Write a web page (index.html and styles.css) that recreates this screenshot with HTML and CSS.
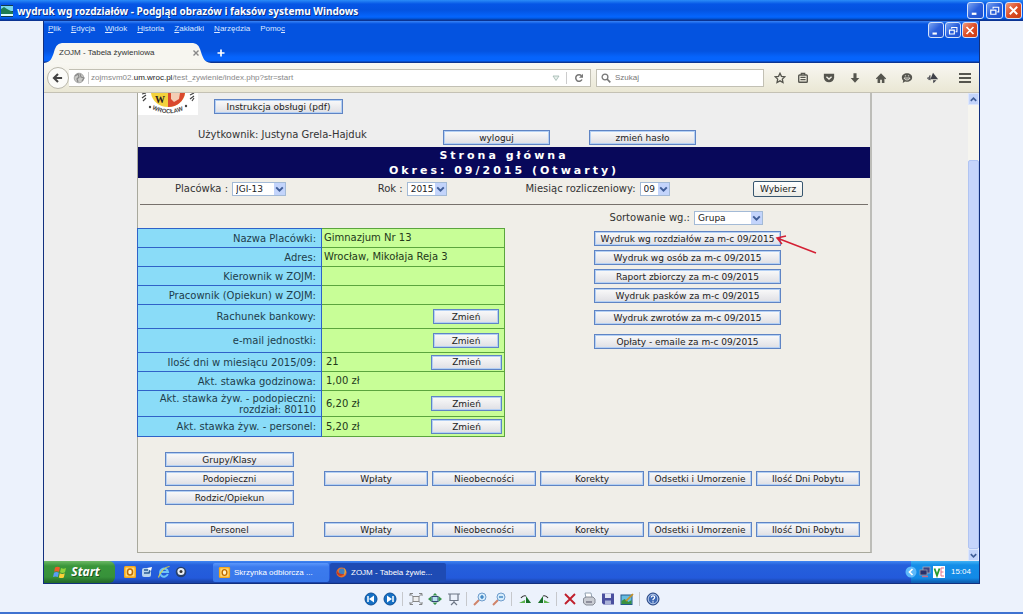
FILE: index.html
```html
<!DOCTYPE html>
<html lang="pl">
<head>
<meta charset="utf-8">
<title>wydruk wg rozdziałów</title>
<link rel="stylesheet" href="styles.css">
</head>
<body>
<svg class="defs" width="0" height="0" aria-hidden="true">
  <symbol id="i-min" viewBox="0 0 16 16"><path d="M4 11.500h5" stroke="#fff" stroke-width="2.400"/></symbol>
  <symbol id="i-max" viewBox="0 0 16 16"><path d="M6.500 6V4.500h6v5H11M6 4.500h7" fill="none" stroke="#fff" stroke-width="1.200"/><path d="M4 7.500h5.500v4.500H4z" fill="none" stroke="#fff" stroke-width="1.300"/></symbol>
  <symbol id="i-close" viewBox="0 0 16 16"><path d="M4 4l8 8M12 4l-8 8" stroke="#fff" stroke-width="2"/></symbol>
  <symbol id="i-down" viewBox="0 0 10 10"><path d="M2 3.500l3 3 3-3" fill="none" stroke="#3f5d98" stroke-width="1.800"/></symbol>
  <symbol id="i-up" viewBox="0 0 10 10"><path d="M2 6.500l3-3 3 3" fill="none" stroke="#3f5d98" stroke-width="1.800"/></symbol>
  <symbol id="i-outlook" viewBox="0 0 14 14"><rect x="1" y="1" width="12" height="12" rx="1.500" fill="#f5a81c"/><rect x="2.500" y="2.500" width="9" height="9" fill="#ffd874"/><ellipse cx="7" cy="7" rx="2.500" ry="3.100" fill="#fff3c8" stroke="#c06c00" stroke-width="1.500"/></symbol>
</svg>

<div class="viewer">
  <header class="titlebar">
    <svg class="app-icon" viewBox="0 0 12 12"><rect width="12" height="12" fill="#123a4c"/><path d="M0 1h12v5H0z" fill="#76d7ee"/><path d="M0 4l3-2 3 2 6 3v2H0z" fill="#1f7d54"/><path d="M0 9h12v2H0z" fill="#dff"/></svg>
    <h1 class="viewer-title">wydruk wg rozdziałów - Podgląd obrazów i faksów systemu Windows</h1>
    <div class="win-buttons">
      <button class="win" aria-label="Minimalizuj"><svg><use href="#i-min"/></svg></button>
      <button class="win" aria-label="Przywróć"><svg><use href="#i-max"/></svg></button>
      <button class="win win-close" aria-label="Zamknij"><svg><use href="#i-close"/></svg></button>
    </div>
  </header>

  <div class="stage">
    <div class="browser">
      <div class="chrome">
        <div class="menu-row">
          <nav class="menu">
            <a href="#"><u>P</u>lik</a><a href="#"><u>E</u>dycja</a><a href="#"><u>W</u>idok</a><a href="#"><u>H</u>istoria</a><a href="#"><u>Z</u>akładki</a><a href="#"><u>N</u>arzędzia</a><a href="#">Pomo<u>c</u></a>
          </nav>
          <div class="win-buttons small">
            <button class="win" aria-label="Minimalizuj okno"><svg><use href="#i-min"/></svg></button>
            <button class="win" aria-label="Przywróć okno"><svg><use href="#i-max"/></svg></button>
            <button class="win win-close" aria-label="Zamknij okno"><svg><use href="#i-close"/></svg></button>
          </div>
        </div>
        <div class="tabs">
          <div class="tab">
            <svg class="tab-shape" viewBox="0 0 167 20" preserveAspectRatio="none"><path d="M0 20C7 19 8 15 10 9 12 2 14 0 20 0H147C153 0 155 2 157 9 159 15 160 19 167 20Z" fill="#f7f6f0"/></svg>
            <span class="tab-title">ZOJM - Tabela żywieniowa</span>
            <button class="tab-close" aria-label="Zamknij kartę"><svg viewBox="0 0 8 8"><path d="M1.500 1.500l5 5M6.500 1.500l-5 5" stroke="#888" stroke-width="1.400"/></svg></button>
          </div>
          <button class="tab-new" aria-label="Nowa karta"><svg viewBox="0 0 8 8"><path d="M4 .5v7M.5 4h7" stroke="#fff" stroke-width="1.700"/></svg></button>
        </div>
      </div>

      <div class="navbar">
        <button class="back" aria-label="Wstecz"><svg viewBox="0 0 22 22"><path d="M6 11h10M11 6l-5 5 5 5" fill="none" stroke="#444" stroke-width="2.500"/></svg></button>
        <div class="urlbar">
          <svg class="globe" viewBox="0 0 12 12"><circle cx="6" cy="6" r="4.800" fill="#c9c9c6" stroke="#999" stroke-width=".8"/><path d="M2 4l3-2 1 3-2 2 1 3M7 2l1 3 3 1-2 3" fill="none" stroke="#888" stroke-width="1.200"/></svg>
          <span class="url">zojmsvm02.<b>um.wroc.pl</b>/test_zywienie/index.php?str=start</span>
          <svg class="drop" viewBox="0 0 8 8"><path d="M1 2h6L4 6.500z" fill="#e8f0ec" stroke="#9fb5ad" stroke-width=".8"/></svg>
          <button class="reload" aria-label="Odśwież"><svg viewBox="0 0 10 10"><path d="M8 6.500A3.300 3.300 0 1 1 7.500 2.800" fill="none" stroke="#777" stroke-width="1.500"/><path d="M9 .8v4H5z" fill="#777"/></svg></button>
        </div>
        <label class="search">
          <svg viewBox="0 0 10 10"><circle cx="4" cy="4" r="2.900" fill="none" stroke="#777" stroke-width="1.300"/><path d="M6 6l3.300 3.300" stroke="#777" stroke-width="1.700"/></svg>
          <input type="text" placeholder="Szukaj" aria-label="Szukaj">
        </label>
        <div class="tools">
          <button aria-label="Dodaj zakładkę"><svg viewBox="0 0 14 14"><path d="M7 1.500l1.700 3.600 3.900.5-2.900 2.700.8 3.900L7 10.300l-3.500 1.900.8-3.900L1.400 5.600l3.900-.5z" fill="none" stroke="#55554e" stroke-width="1.500"/></svg></button>
          <button aria-label="Zakładki"><svg viewBox="0 0 14 14"><rect x="2" y="3.500" width="10" height="8.500" rx="1" fill="none" stroke="#55554e" stroke-width="1.600"/><path d="M5 3.500V1.500h4v2M4 6.300h6M4 9h6" fill="none" stroke="#55554e" stroke-width="1.400"/></svg></button>
          <button aria-label="Pocket"><svg viewBox="0 0 14 14"><path d="M1 2h12v4.500a6 5.500 0 0 1-12 0z" fill="#55554e"/><path d="M4 5.500l3 2.800 3-2.800" fill="none" stroke="#f2f0e6" stroke-width="1.600"/></svg></button>
          <button aria-label="Pobrane"><svg viewBox="0 0 14 14"><path d="M5.200 1.500h3.600V7H12l-5 5.500L2 7h3.200z" fill="#55554e"/></svg></button>
          <button aria-label="Strona startowa"><svg viewBox="0 0 14 14"><path d="M7 1.500L1 7.500l1 1 1-.8v5h3V9h2v3.700h3v-5l1 .8 1-1z" fill="#55554e"/></svg></button>
          <button aria-label="Czat"><svg viewBox="0 0 14 14"><path d="M7 1.500c3.500 0 6 2 6 5s-2.500 5-6 5c-.8 0-1.500-.1-2.200-.4L2 12.700l.6-2.700C1.600 9.200 1 8 1 6.500c0-3 2.500-5 6-5z" fill="#55554e"/><path d="M3.500 7h7c-1 3-6 3-7 0zM4.500 4.500h1.500M8 4.500h1.500" stroke="#f2f0e6" stroke-width="1" fill="none"/></svg></button>
          <button aria-label="Dodatek"><svg viewBox="0 0 14 14"><path d="M7 1l6 7.500H4zM0 7l2-1.500v4zM2.500 4.500l1.500-1v6.500l-1.500-1zM7 9.500h4L7.500 13z" fill="#3f4148"/></svg></button>
          <button class="burger" aria-label="Menu"><svg viewBox="0 0 14 14"><path d="M1 3h12M1 7h12M1 11h12" stroke="#55554e" stroke-width="2"/></svg></button>
        </div>
      </div>

      <div class="viewport">
        <main class="panel">
          <div class="panel-head">
            <svg class="crest" viewBox="0 0 60 22">
              <rect width="60" height="22" fill="#fff"/>
              <path d="M13 0H47C46 8 39 14 30 14S14 8 13 0z" fill="#f3d23d"/><path d="M30 0h17C46 8 39 14 30 14z" fill="#d9492f"/><path d="M33 0h9l-1 6-5 3-3-3z" fill="#f4cdb4"/>
              <path id="ring" d="M14 16Q31 25 50 15" fill="none"/>
              <text x="17" y="10" class="crest-w">W</text>
              <text class="crest-t"><textPath href="#ring">WROCŁAW</textPath></text>
              <circle cx="12" cy="14" r="1.200" fill="#444"/><circle cx="48" cy="13" r="1.200" fill="#444"/>
              <path d="M4 1l4-1M4 5l4-3M5 8l3-3M52 2l4-2M52 6l4-3M54 8l2-3" stroke="#444" stroke-width="1.200"/>
            </svg>
            <div class="head-rows">
              <button class="btn w-129">Instrukcja obsługi (pdf)</button>
              <div class="user-row">
                <span class="user">Użytkownik: Justyna Grela-Hajduk</span>
                <button class="btn w-107">wyloguj</button>
                <button class="btn w-107">zmień hasło</button>
              </div>
            </div>
          </div>

          <h2 class="band">Strona główna<br>Okres: 09/2015 (Otwarty)</h2>

          <form class="filters">
            <div class="field"><label for="place">Placówka :</label><span class="sel w-54"><select id="place"><option>JGI-13</option></select><svg><use href="#i-down"/></svg></span></div>
            <div class="field"><label for="year">Rok :</label><span class="sel w-40"><select id="year"><option>2015</option></select><svg><use href="#i-down"/></svg></span></div>
            <div class="field"><label for="month">Miesiąc rozliczeniowy:</label><span class="sel w-30"><select id="month"><option>09</option></select><svg><use href="#i-down"/></svg></span></div>
            <button class="xp-btn" type="button">Wybierz</button>
          </form>

          <div class="columns">
            <table class="info">
              <tbody>
                <tr><th scope="row">Nazwa Placówki:</th><td>Gimnazjum Nr 13</td></tr>
                <tr><th scope="row">Adres:</th><td>Wrocław, Mikołaja Reja 3</td></tr>
                <tr><th scope="row">Kierownik w ZOJM:</th><td></td></tr>
                <tr><th scope="row">Pracownik (Opiekun) w ZOJM:</th><td></td></tr>
                <tr class="tall"><th scope="row">Rachunek bankowy:</th><td><div class="cell inset"><span></span><button class="btn w-66">Zmień</button></div></td></tr>
                <tr class="tall"><th scope="row">e-mail jednostki:</th><td><div class="cell inset"><span></span><button class="btn w-66">Zmień</button></div></td></tr>
                <tr><th scope="row">Ilość dni w miesiącu 2015/09:</th><td><div class="cell"><span>21</span><button class="btn w-71">Zmień</button></div></td></tr>
                <tr><th scope="row">Akt. stawka godzinowa:</th><td><div class="cell"><span>1,00 zł</span></div></td></tr>
                <tr class="double"><th scope="row">Akt. stawka żyw. - podopieczni:<br>rozdział: 80110</th><td><div class="cell"><span>6,20 zł</span><button class="btn w-71">Zmień</button></div></td></tr>
                <tr class="last"><th scope="row">Akt. stawka żyw. - personel:</th><td><div class="cell"><span>5,20 zł</span><button class="btn w-71">Zmień</button></div></td></tr>
              </tbody>
            </table>
            <div class="reports">
              <div class="field sort"><label for="sort">Sortowanie wg.:</label><span class="sel w-69"><select id="sort"><option>Grupa</option></select><svg><use href="#i-down"/></svg></span></div>
              <div class="marked">
                <button class="btn">Wydruk wg rozdziałów za m-c 09/2015</button>
                <svg class="arrow" viewBox="0 0 44 20"><path d="M42 18L3 3M12 1L3 3l5 6" fill="none" stroke="#d42034" stroke-width="1.500"/></svg>
              </div>
              <button class="btn">Wydruk wg osób za m-c 09/2015</button>
              <button class="btn">Raport zbiorczy za m-c 09/2015</button>
              <button class="btn">Wydruk pasków za m-c 09/2015</button>
              <button class="btn apart">Wydruk zwrotów za m-c 09/2015</button>
              <button class="btn apart-more">Opłaty - emaile za m-c 09/2015</button>
            </div>
          </div>

          <div class="actions">
            <button class="btn first">Grupy/Klasy</button>
            <button class="btn first">Podopieczni</button>
            <button class="btn">Wpłaty</button><button class="btn">Nieobecności</button><button class="btn">Korekty</button><button class="btn">Odsetki i Umorzenie</button><button class="btn">Ilość Dni Pobytu</button>
            <button class="btn first">Rodzic/Opiekun</button>
          </div>
          <div class="actions staff">
            <button class="btn first">Personel</button>
            <button class="btn">Wpłaty</button><button class="btn">Nieobecności</button><button class="btn">Korekty</button><button class="btn">Odsetki i Umorzenie</button><button class="btn">Ilość Dni Pobytu</button>
          </div>
        </main>
        <div class="scrollbar">
          <button aria-label="W górę"><svg><use href="#i-up"/></svg></button>
          <div class="thumb"></div>
          <button aria-label="W dół"><svg><use href="#i-down"/></svg></button>
        </div>
      </div>

      <footer class="taskbar">
        <button class="start"><svg viewBox="0 0 14 14"><path d="M2 2.500q2.500-1.500 5 0L6 6.800q-2.300-1.300-4.800 0z" fill="#ee5b2b"/><path d="M8 3q2.500 1.300 5 0l-1 4.300q-2.500 1.200-5 0z" fill="#8ed23c"/><path d="M1 7.800q2.400-1.400 4.800 0l-1 4.200Q2.500 10.800 0 12z" fill="#5a9cf5"/><path d="M6.800 8.300q2.400 1.300 5 0l-1 4.200q-2.500 1.200-5 0z" fill="#fbd037"/></svg>Start</button>
        <div class="quick">
          <svg viewBox="0 0 14 14"><use href="#i-outlook"/></svg>
          <svg viewBox="0 0 14 14"><rect x="2" y="3" width="9" height="9" rx="2" fill="#b8d4ee"/><path d="M4 8h5l2-5M4 5h4" stroke="#2a5c96" stroke-width="1.600" fill="none"/><path d="M7 3l5-1-1 4z" fill="#fff"/></svg>
          <svg viewBox="0 0 14 14"><path d="M10.800 9A4 4 0 1 1 11 7H4.500" fill="none" stroke="#6fc4f7" stroke-width="2"/><path d="M1.500 12.500C3 7 8 1.500 12.500 1.500" fill="none" stroke="#d9d452" stroke-width="1.100"/></svg>
          <svg viewBox="0 0 14 14"><circle cx="7" cy="7" r="5.300" fill="#27406b"/><circle cx="7" cy="6.500" r="3.600" fill="#e9eef5"/><circle cx="7" cy="6.500" r="1.500" fill="#333"/></svg>
        </div>
        <button class="task"><svg viewBox="0 0 14 14"><use href="#i-outlook"/></svg>Skrzynka odbiorcza ...</button>
        <button class="task active"><svg viewBox="0 0 14 14"><circle cx="7" cy="7" r="5.500" fill="#e8702a"/><circle cx="7.500" cy="6" r="3.400" fill="#3f7fc0"/><path d="M2 4q1 5 8 5-5 4-8-1z" fill="#c33a24"/><path d="M10 2q3 4 0 8 1-4 0-8z" fill="#f5c23b"/></svg>ZOJM - Tabela żywie...</button>
        <div class="tray">
          <svg class="chev" viewBox="0 0 12 12"><circle cx="6" cy="6" r="5.500" fill="#5db9fa"/><path d="M7.500 3L4.500 6l3 3" fill="none" stroke="#fff" stroke-width="1.700"/></svg>
          <svg viewBox="0 0 12 12"><rect x="4" y="1" width="7" height="6" fill="#3c4380" stroke="#aab" stroke-width=".8"/><rect x="1" y="4" width="7" height="5" fill="#28306a" stroke="#99a" stroke-width=".8"/><path d="M3 10.500h6" stroke="#c66b87" stroke-width="1.400"/></svg>
          <svg viewBox="0 0 12 12"><rect width="12" height="12" fill="#fff"/><path d="M1.500 2.500L4 9.500l2.500-7" fill="none" stroke="#259b2e" stroke-width="1.800"/><path d="M11 2H8v8h3M8 6h2.500" fill="none" stroke="#e0768c" stroke-width="1"/></svg>
          <time>15:04</time>
        </div>
      </footer>
    </div>

    <div class="toolbar">
      <button aria-label="Poprzedni"><svg viewBox="0 0 14 14"><circle cx="7" cy="7" r="6" fill="#1570c4" stroke="#0e4f97"/><path d="M4 4v6" stroke="#fff" stroke-width="1.500"/><path d="M10 3.500v7L5 7z" fill="#fff"/></svg></button>
      <button aria-label="Następny"><svg viewBox="0 0 14 14"><circle cx="7" cy="7" r="6" fill="#1570c4" stroke="#0e4f97"/><path d="M10 4v6" stroke="#fff" stroke-width="1.500"/><path d="M4 3.500v7L9 7z" fill="#fff"/></svg></button>
      <i></i>
      <button aria-label="Najlepsze dopasowanie"><svg viewBox="0 0 14 14"><rect x="4" y="4.500" width="6" height="5" fill="#eee" stroke="#888"/><path d="M1 4V1.500h3M10 1.500h3V4M13 10v2.500h-3M4 12.500H1V10M1.500 2l2.500 2.500M12.500 2L10 4.500M12.500 12L10 9.500M1.500 12L4 9.500" fill="none" stroke="#777" stroke-width=".9"/></svg></button>
      <button aria-label="Rzeczywisty rozmiar"><svg viewBox="0 0 14 14"><rect x="4" y="4.500" width="6" height="5" fill="#b9e3ef" stroke="#347"/><path d="M7 1l2.500 2.500h-5zM7 13l2.500-2.500h-5zM0 7l3.500-3v6zM14 7l-3.500-3v6z" fill="#36924a"/></svg></button>
      <button aria-label="Pokaz slajdów"><svg viewBox="0 0 14 14"><path d="M1 2h12M3 2v6.500h8V2M7 8.500v2M4 13l3-3 3 3" fill="none" stroke="#6d7685" stroke-width="1.200"/></svg></button>
      <i></i>
      <button aria-label="Powiększ"><svg viewBox="0 0 14 14"><path d="M1 13l5-5" stroke="#d0846a" stroke-width="2"/><circle cx="9" cy="5" r="4" fill="#d5ecfc" stroke="#6e9ccc"/><path d="M9 3v4M7 5h4" stroke="#2472b8" stroke-width="1.200"/></svg></button>
      <button aria-label="Pomniejsz"><svg viewBox="0 0 14 14"><path d="M1 13l5-5" stroke="#d0846a" stroke-width="2"/><circle cx="9" cy="5" r="4" fill="#d5ecfc" stroke="#6e9ccc"/><path d="M7 5h4" stroke="#2472b8" stroke-width="1.200"/></svg></button>
      <i></i>
      <button aria-label="Obróć w prawo"><svg viewBox="0 0 14 14"><path d="M1 11h6V8z" fill="#5cb44c"/><path d="M8 11V4l5 7z" fill="#176f27"/><path d="M3 6q2-3 5-2" fill="none" stroke="#333" stroke-width="1.200"/></svg></button>
      <button aria-label="Obróć w lewo"><svg viewBox="0 0 14 14"><path d="M13 11H7V8z" fill="#5cb44c"/><path d="M6 11V4l-5 7z" fill="#176f27"/><path d="M11 6Q9 3 6 4" fill="none" stroke="#333" stroke-width="1.200"/></svg></button>
      <i></i>
      <button aria-label="Usuń"><svg viewBox="0 0 14 14"><path d="M2 2l10 10M12 2L2 12" stroke="#c01f2c" stroke-width="1.900"/></svg></button>
      <button aria-label="Drukuj"><svg viewBox="0 0 14 14"><path d="M4 6L3 1h6l1 5" fill="#fff" stroke="#89a" stroke-width=".9"/><path d="M1.500 6.500L4 5h7l2 2v4l-2 2H4l-2.500-2z" fill="#c9ccd3" stroke="#7d828c" stroke-width=".9"/><path d="M4 10h6" stroke="#667" stroke-width="1.200"/></svg></button>
      <button aria-label="Zapisz"><svg viewBox="0 0 14 14"><path d="M1 1.500h12v11H2.500L1 11z" fill="#4a4f9e"/><path d="M4 1.500h6v4.500H4z" fill="#dfe4f4"/><path d="M4 8.500h6v4H4z" fill="#aab2d8"/></svg></button>
      <button aria-label="Edytuj"><svg viewBox="0 0 14 14"><rect x="1" y="3" width="11" height="9.500" fill="#65bce0" stroke="#245a8c"/><path d="M1.500 9l3-2 4 3 3-2v4h-10z" fill="#3b9140"/><path d="M6 9l7-7" stroke="#c99224" stroke-width="1.700"/></svg></button>
      <i></i>
      <button aria-label="Pomoc"><svg viewBox="0 0 14 14"><circle cx="7" cy="7" r="6" fill="#3d68b4" stroke="#24417c"/><circle cx="7" cy="7" r="4.800" fill="none" stroke="#dbe6f7" stroke-width=".8"/><path d="M5.300 5.500q0-1.700 1.700-1.700t1.700 1.500Q8.700 6.400 7 7.500v.8M7 9.300v1.200" fill="none" stroke="#fff" stroke-width="1.200"/></svg></button>
    </div>
  </div>
</div>
</body>
</html>
```

FILE: styles.css
```css
* { box-sizing: border-box; }
body { margin: 0; font-family: "DejaVu Sans", sans-serif; font-size: 10px; line-height: 12px; color: #333; }
button { margin: 0; padding: 0; border: 0; background: none; font: inherit; color: inherit; display: flex; align-items: center; justify-content: center; }
button svg, .tray svg, .quick svg { display: block; }
.defs { position: absolute; }

.viewer { min-height: 100vh; display: flex; flex-direction: column; background: #ecf2fc; border-bottom: 2px solid #3f72d0; }
.titlebar { height: 21px; flex: none; display: flex; align-items: center; gap: 4px; padding: 0 0 0 1px; background: linear-gradient(#2b8cf8 0, #0656e6 4px, #0453e0 10px, #0566ff 17px, #0150d0 19px, #0b3492 20px); }
.app-icon { width: 12px; height: 12px; }
.viewer-title { flex: 1; margin: 0; color: #fff; font: bold 10px/14px "Noto Sans", "DejaVu Sans Condensed", sans-serif; text-shadow: 1px 1px #0a2f86; }
.win-buttons { display: flex; gap: 2px; padding-right: 1px; }
.win { width: 17px; height: 17px; border: 1px solid #d4e2fb; border-radius: 3px; background: linear-gradient(135deg, #7ba4f0, #2a5fdc 50%, #1e50cc); }
.win svg { width: 15px; height: 15px; }
.win-close { background: linear-gradient(135deg, #f09a7c, #dd4e27 50%, #c93a12); }
.small .win { width: 16px; height: 16px; }
.small { gap: 1px; padding: 1px 1px 0 0; }

.stage { flex: 1; padding: 0 43px; display: flex; flex-direction: column; }
.browser { flex: 1; display: flex; flex-direction: column; border: solid #12307e; border-width: 0 1px 1px; background: #eee; }
.chrome { font: 8px/12px "Liberation Sans", sans-serif; background: linear-gradient(#3a84f6 0, #0453e0 3px, #0453e0 30px, #0664fc 36px, #0664fc 40px, #0b3492 41px); }
.menu-row { height: 22px; display: flex; justify-content: space-between; }
.menu { display: flex; gap: 10px; padding: 2px 0 0 4px; }
.menu a { color: #dbe8ff; text-decoration: none; }
.tabs { height: 20px; display: flex; align-items: stretch; }
.tab { position: relative; width: 167px; display: flex; align-items: center; justify-content: space-between; padding: 0 11px 0 15px; color: #333; }
.tab-shape { position: absolute; inset: 0; width: 100%; height: 100%; }
.tab-title { position: relative; }
.tab-close { position: relative; }
.tab-close svg, .tab-new svg { width: 8px; height: 8px; }
.tab-new { width: 20px; }

.navbar { height: 30px; flex: none; display: flex; align-items: center; padding: 0 3px; background: linear-gradient(#f8f7f2, #eae7d4); border-bottom: 1px solid #c4c1b4; font: 8px/12px "Liberation Sans", sans-serif; }
.back { width: 22px; height: 22px; flex: none; border: 1px solid #b9b7ab; border-radius: 50%; background: #fbfbf8; }
.back svg { width: 18px; height: 18px; }
.urlbar { flex: 1; height: 18px; display: flex; align-items: center; border: 1px solid #c2c0b4; border-left: 0; background: #fff; padding-left: 4px; }
.globe { width: 12px; height: 12px; margin-right: 3px; }
.url { flex: 1; border-left: 1px solid #ccc; padding-left: 2px; color: #888; }
.url b { font-weight: normal; color: #222; }
.drop { width: 8px; height: 8px; margin-right: 6px; }
.reload { width: 24px; height: 12px; border-left: 1px solid #ccc; }
.reload svg { width: 10px; height: 10px; }
.search { width: 168px; height: 18px; margin-left: 5px; display: flex; align-items: center; gap: 4px; border: 1px solid #c2c0b4; background: #fff; padding-left: 4px; }
.search svg { width: 10px; height: 10px; flex: none; }
.search input { width: 100%; border: 0; padding: 0; outline: 0; font: inherit; background: none; }
.search input::placeholder { color: #777; opacity: 1; }
.tools { display: flex; align-items: center; gap: 14px; padding: 0 4px 0 10px; }
.tools svg { width: 12px; height: 12px; }
.tools button:first-child { margin-right: -3px; }
.tools .burger { margin-left: 3px; padding-left: 2px; }
.burger svg { width: 14px; height: 14px; }

.viewport { flex: 1; display: flex; }
.panel { flex: 1; margin: 0 96px 8px 93px; border: 1px solid #a8a89c; border-top: 0; border-right: 2px solid #bdbdb8; background: #f0eee8; }
.panel-head { display: flex; background: #eee; padding-bottom: 2px; }
.crest { width: 60px; height: 22px; flex: none; }
.crest-w { font: bold 10px/10px "Liberation Serif", serif; fill: #2b2020; }
.crest-t { font: bold 6px "Liberation Sans", sans-serif; fill: #444; }
.head-rows { flex: 1; padding-top: 6px; }
.head-rows > .btn { margin: 0 0 16px 16px; }
.user-row { display: flex; align-items: flex-start; }
.user { flex: 0 0 245px; line-height: 10px; }
.user-row .btn + .btn { margin-left: 39px; }

.btn { height: 15px; font-size: 9px; white-space: nowrap; color: #222; border: 1px solid #5f84c4; background: linear-gradient(#fafafa, #dfdfe4); box-shadow: inset 0 0 0 1px #b4d0f4; }
.w-129 { width: 129px; }
.w-107 { width: 107px; }
.w-66 { width: 66px; }
.w-71 { width: 71px; }

.band { margin: 0; padding-top: 1px; background: #08085a; color: #fff; text-align: center; font-size: 11px; line-height: 15px; letter-spacing: 3px; }

.filters { display: grid; grid-template-columns: 203fr 148fr 228fr 115fr; align-items: center; margin: 0 2px; padding: 3px 0 7px 35px; border-bottom: 1px solid #77716c; }
.field { display: flex; align-items: center; gap: 4px; white-space: nowrap; }
.sel { position: relative; display: block; height: 14px; }
.sel select { display: block; width: 100%; height: 100%; appearance: none; margin: 0; padding: 0 0 0 3px; border: 1px solid #a3bad6; border-radius: 0; background: #fff; font: 9px/12px "DejaVu Sans", sans-serif; color: #222; }
.sel svg { position: absolute; right: 1px; top: 1px; width: 11px; height: 12px; background: #c3d4fb; pointer-events: none; }
.w-54 { width: 54px; }
.w-40 { width: 40px; }
.w-30 { width: 30px; }
.w-69 { width: 69px; }
.xp-btn { width: 50px; height: 16px; border: 1px solid #38566f; border-radius: 2px; background: linear-gradient(#fff, #ecebe5); font-size: 9px; color: #222; }

.columns { display: flex; align-items: flex-start; gap: 89px; }
.info { width: 368px; margin: 23px 0 0 -1px; border-collapse: collapse; table-layout: fixed; }
.info tr { height: 19px; }
.info .tall { height: 24px; }
.info .double { height: 26px; }
.info .last { height: 20px; }
.info th { width: 184px; padding: 0 5px 0 0; border: 1px solid #2f62c8; background: #8adcf8; font-weight: normal; text-align: right; line-height: 11px; white-space: nowrap; color: #1d3c4c; }
.info td { padding: 0 2px; border: 1px solid #5ba53e; background: #c8fe97; color: #23391a; }
.cell { display: flex; align-items: center; justify-content: space-between; padding-left: 2px; min-height: 15px; }
.inset { padding-right: 3px; }
.reports { width: 187px; padding-top: 6px; display: flex; flex-direction: column; gap: 4px; }
.reports .btn { width: 100%; }
.sort { justify-content: flex-end; padding-right: 18px; margin-bottom: 2px; }
.marked { position: relative; }
.arrow { position: absolute; left: 180px; top: 4px; width: 44px; height: 20px; }
.reports .apart { margin-top: 3px; }
.reports .apart-more { margin-top: 5px; }

.actions { display: grid; grid-template-columns: 155fr repeat(5, 104fr); gap: 4px; padding: 15px 10px 0 27px; }
.actions .first { grid-column: 1; width: 129px; }
.staff { padding-top: 17px; padding-bottom: 15px; }

.scrollbar { width: 11px; display: flex; flex-direction: column; background: #f6f5ef; }
.scrollbar button { height: 12px; background: #c3d4fb; border: 1px solid #dde7fd; }
.scrollbar svg { width: 9px; height: 9px; }
.thumb { flex: 1; margin: 55px 0 0; background: #c6d5fb; border: 1px solid #b0c4f2; border-radius: 2px; }

.taskbar { height: 22px; flex: none; display: flex; align-items: stretch; background: linear-gradient(#3f86f2 0, #2560dc 4px, #235adb 17px, #1a44ab 21px); color: #fff; font: 8px/12px "Liberation Sans", sans-serif; }
.start { width: 71px; gap: 4px; padding-right: 6px; border-radius: 0 6px 6px 0; background: linear-gradient(#6cb865 0, #3a963a 5px, #37913a 16px, #256c28 21px); font: italic bold 12px/16px "Open Sans", sans-serif; text-shadow: 1px 1px #1f5421; }
.start svg { width: 14px; height: 14px; }
.quick { display: flex; align-items: center; gap: 3px; padding: 0 25px 0 8px; }
.quick svg { width: 14px; height: 14px; }
.task { width: 116px; margin: 2px 1px 1px 0; gap: 3px; justify-content: flex-start; padding-left: 5px; border-radius: 2px; background: linear-gradient(#5b97fb, #3c7bee 4px, #3877ea); }
.task svg { width: 13px; height: 13px; }
.active { background: #1e4bb4; }
.tray { margin-left: auto; display: flex; align-items: center; gap: 2px; padding-right: 8px; background: linear-gradient(#42b2f5 0, #148ee8 4px, #128ae6 17px, #0e62b4 21px); }
.tray svg { width: 12px; height: 12px; }
.tray .chev { margin-left: -6px; }
.tray time { margin-left: 4px; }

.toolbar { height: 28px; flex: none; display: flex; align-items: center; justify-content: center; gap: 5px; padding-top: 2px; }
.toolbar svg { width: 14px; height: 14px; }
.toolbar i { width: 2px; height: 14px; border-left: 1px solid #c6c8cc; }
```
